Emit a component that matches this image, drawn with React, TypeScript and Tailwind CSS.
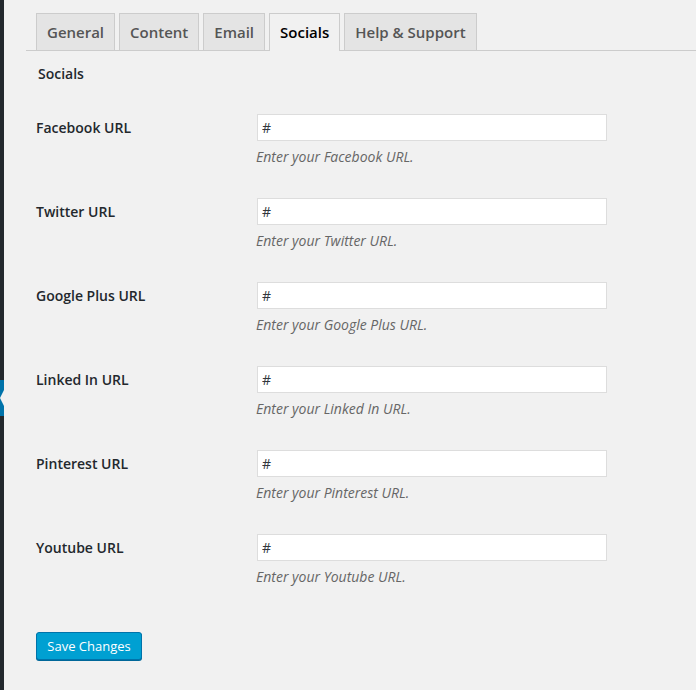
import React from "react";

const tabs = ["General", "Content", "Email", "Socials", "Help & Support"];

const fields = [
  { label: "Facebook URL", name: "Facebook" },
  { label: "Twitter URL", name: "Twitter" },
  { label: "Google Plus URL", name: "Google Plus" },
  { label: "Linked In URL", name: "Linked In" },
  { label: "Pinterest URL", name: "Pinterest" },
  { label: "Youtube URL", name: "Youtube" },
];

function SidebarEdge() {
  return (
    <div className="w-[4px] shrink-0 bg-[#23282d] flex flex-col">
      <div className="h-[380px]" />
      <svg width="4" height="36" viewBox="0 0 4 36" className="block">
        <rect width="4" height="36" fill="#0073aa" />
        <polygon points="4,10 0,18 4,26" fill="#f1f1f1" />
      </svg>
    </div>
  );
}

export default function App() {
  return (
    <div
      className="flex w-[696px] h-[690px] overflow-hidden bg-[#f1f1f1] text-[#23282d]"
      style={{ fontFamily: '"Open Sans", "Noto Sans", sans-serif' }}
    >
      <SidebarEdge />
      <div className="flex-1 pl-[22px] pt-[13px]">
        {/* tabs */}
        <div className="flex items-end gap-[4px] pl-[10px] border-b border-[#ccc] h-[38px]">
          {tabs.map((t) => {
            const active = t === "Socials";
            return (
              <div
                key={t}
                className={`h-[37px] px-[10px] pt-[1px] border border-b-0 border-[#ccc] text-[15px] font-semibold leading-[35px] ${
                  active
                    ? "bg-[#f1f1f1] text-black h-[38px] -mb-px"
                    : "bg-[#e4e4e4] text-[#555]"
                }`}
              >
                {t}
              </div>
            );
          })}
        </div>

        <h2 className="pl-[12px] mt-[13px] text-[14px] font-semibold leading-[20px]">
          Socials
        </h2>

        <div className="pl-[10px] mt-[15px]">
          {fields.map((f) => (
            <div key={f.label} className="flex h-[84px]">
              <div className="w-[221px] pt-[20px] text-[14px] font-semibold leading-[18px]">
                {f.label}
              </div>
              <div className="pt-[15px]">
                <input
                  readOnly
                  value="#"
                  className="block w-[350px] h-[27px] border border-[#ddd] bg-white px-[4px] text-[14px] text-[#32373c] outline-none"
                />
                <p className="mt-[5px] -ml-[1px] text-[14px] italic leading-[21px] text-[#666]">
                  Enter your {f.name} URL.
                </p>
              </div>
            </div>
          ))}
        </div>

        <div className="pl-[10px] mt-[29px]">
          <button className="w-[106px] h-[28px] rounded-[3px] border border-[#0073aa] bg-[#00a0d2] text-white text-[13px] leading-[26px] shadow-[0_1px_0_#006799]">
            Save Changes
          </button>
        </div>
      </div>
    </div>
  );
}
